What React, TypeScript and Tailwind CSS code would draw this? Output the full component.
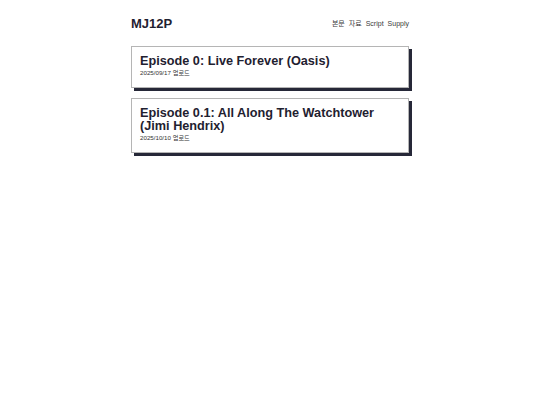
const posts = [
  { title: 'Episode 0: Live Forever (Oasis)', date: '2025/09/17 업로드' },
  { title: 'Episode 0.1: All Along The Watchtower (Jimi Hendrix)', date: '2025/10/10 업로드' },
];

const nav = ['본문', '자료', 'Script', 'Supply'];

export default function App() {
  return (
    <div className="min-h-screen bg-white text-[#1f2130] font-['Liberation_Sans','Noto_Sans_CJK_KR',sans-serif]">
      <div className="w-[278px] mx-auto pt-[17px]">
        {/* Header */}
        <header className="flex items-center justify-between">
          <h1 className="text-[13px] leading-[13px] font-bold">MJ12P</h1>
          <nav className="flex gap-[4px] text-[7px] leading-[10px] text-[#3a3a3a]">
            {nav.map(item => (
              <a key={item} href="#">{item}</a>
            ))}
          </nav>
        </header>

        {/* Posts */}
        <div className="mt-[16px] flex flex-col gap-[10px]">
          {posts.map(post => (
            <article
              key={post.title}
              className="border border-[#b5b5b5] bg-white px-[8px] pt-[8px] pb-[9px] shadow-[3px_3px_0_#262838]"
            >
              <h2 className="text-[12.7px] leading-[13px] font-bold pr-[20px]">{post.title}</h2>
              <p className="text-[6.2px] leading-[10px] text-[#333]">{post.date}</p>
            </article>
          ))}
        </div>
      </div>
    </div>
  );
}
